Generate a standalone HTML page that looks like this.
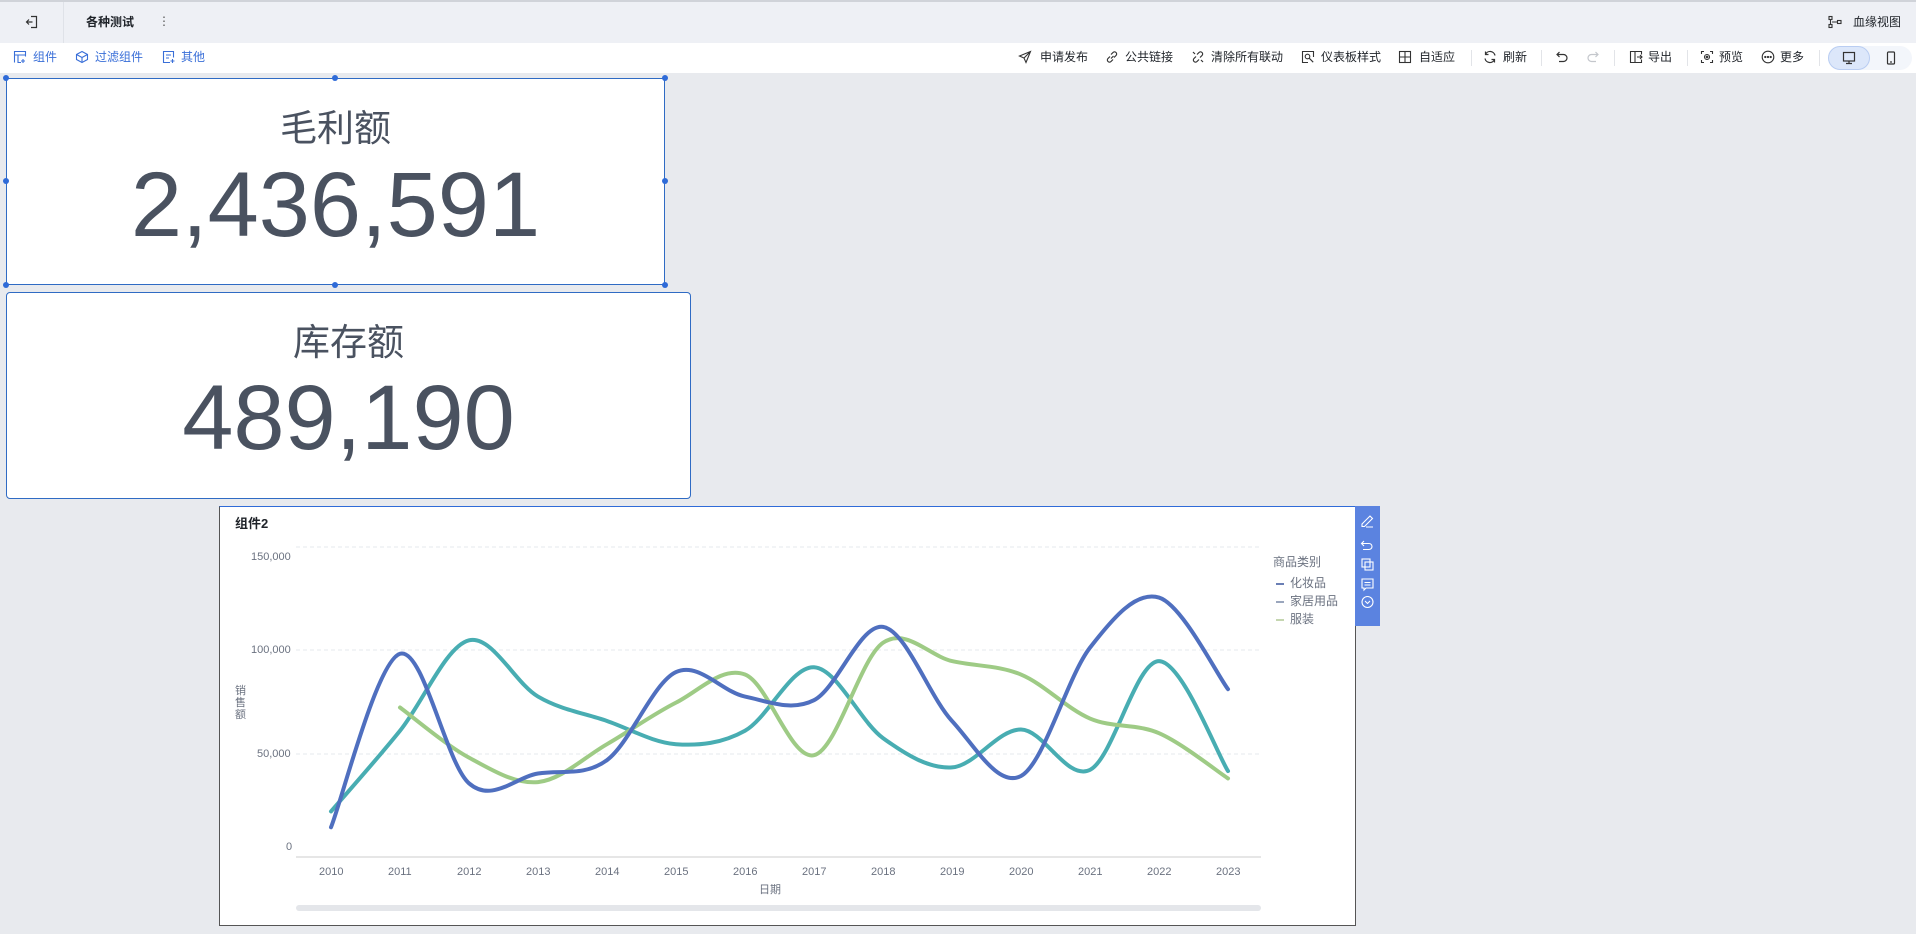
<!DOCTYPE html>
<html><head><meta charset="utf-8">
<style>
*{margin:0;padding:0;box-sizing:border-box}
body{width:1916px;height:934px;overflow:hidden;background:#e8eaee;font-family:"Liberation Sans","Noto Sans CJK SC",sans-serif;color:#1f2329;position:relative}
.abs{position:absolute}
.hdr{left:0;top:0;width:1916px;height:43px;background:#eef0f5;border-top:2px solid #d0d3d9}
.tb{left:0;top:43px;width:1916px;height:30px;background:#fff}
.t{position:absolute;font-size:12px;line-height:14px;white-space:nowrap}
.ic{position:absolute;width:14px;height:14px}
.card{position:absolute;background:#fff;text-align:center;color:#4a5260}
.dot{position:absolute;width:6px;height:6px;border-radius:3px;background:#2f6bd8}
.num{position:absolute;left:0;right:0;font-size:92px;line-height:92px;letter-spacing:0}
.ttl{position:absolute;left:0;right:0;font-size:37px;line-height:40px}
.ax{position:absolute;font-size:11px;color:#6b7280;line-height:12px}
.div{position:absolute;top:50px;width:1px;height:16px;background:#e2e4e8}
</style></head><body>
<div class="abs hdr"></div>
<div class="abs" style="left:63px;top:2px;width:1px;height:41px;background:#dfe2e8"></div>
<svg class="ic" style="left:25px;top:15px" viewBox="0 0 14 14" fill="none" stroke="#333" stroke-width="1.2"><path d="M6 1.5h5.5v11H6M1.5 7h6M4 4.5L1.5 7 4 9.5"/></svg>
<div class="t" style="left:86px;top:15px;font-weight:bold">各种测试</div>
<div class="t" style="left:158px;top:14px;color:#555">⋮</div>
<svg class="ic" style="left:1828px;top:15px" viewBox="0 0 14 14" fill="none" stroke="#333" stroke-width="1.1"><rect x="1" y="1.5" width="3" height="3"/><rect x="1" y="9.5" width="3" height="3"/><rect x="9.5" y="5.5" width="3.5" height="3"/><path d="M2.5 4.5v5M4 7h5.5"/></svg>
<div class="t" style="left:1853px;top:15px">血缘视图</div>

<div class="abs tb"></div>
<svg class="ic" style="left:13px;top:50px" viewBox="0 0 14 14" fill="none" stroke="#3a6fd8" stroke-width="1.1"><path d="M1.5 12.5v-11h11v5M1.5 5h11M5 5v7.5h3M10 9v4M8 11h4"/></svg>
<div class="t" style="left:33px;top:50px;color:#3a6fd8">组件</div>
<svg class="ic" style="left:75px;top:50px" viewBox="0 0 14 14" fill="none" stroke="#3a6fd8" stroke-width="1.1"><path d="M7 1.5l5.5 3v5L7 12.5 1.5 9.5v-5zM1.5 4.5L7 7.5l5.5-3M7 7.5v5"/></svg>
<div class="t" style="left:95px;top:50px;color:#3a6fd8">过滤组件</div>
<svg class="ic" style="left:162px;top:50px" viewBox="0 0 14 14" fill="none" stroke="#3a6fd8" stroke-width="1.1"><path d="M8 12.5H1.5v-11h10v6M4 5h5M4 8h3M10.5 9v4M8.5 11h4"/></svg>
<div class="t" style="left:181px;top:50px;color:#3a6fd8">其他</div>

<svg class="ic" style="left:1018px;top:50px" viewBox="0 0 14 14" fill="none" stroke="#333" stroke-width="1.1"><path d="M12.5 1.5L1.5 6l4.5 2 2 4.5zM6 8l6.5-6.5"/></svg>
<div class="t" style="left:1040px;top:50px">申请发布</div>
<svg class="ic" style="left:1105px;top:50px" viewBox="0 0 14 14" fill="none" stroke="#333" stroke-width="1.2"><path d="M6 8.5l2.5-2.5M5 6.5L3 8.5a2.1 2.1 0 003 3L8 9.5M9 7.5l2-2a2.1 2.1 0 00-3-3L6 4.5"/></svg>
<div class="t" style="left:1125px;top:50px">公共链接</div>
<svg class="ic" style="left:1191px;top:50px" viewBox="0 0 14 14" fill="none" stroke="#333" stroke-width="1.2"><path d="M5 6.5L3 8.5a2.1 2.1 0 003 3L8 9.5M9 7.5l2-2a2.1 2.1 0 00-3-3L6 4.5M2 2l2 2M10 10l2 2"/></svg>
<div class="t" style="left:1211px;top:50px">清除所有联动</div>
<svg class="ic" style="left:1301px;top:50px" viewBox="0 0 14 14" fill="none" stroke="#333" stroke-width="1.1"><path d="M7 12.5H1.5v-11h11V7"/><circle cx="6.5" cy="6.5" r="2.3"/><path d="M8.2 8.2l4 4"/></svg>
<div class="t" style="left:1321px;top:50px">仪表板样式</div>
<svg class="ic" style="left:1398px;top:50px" viewBox="0 0 14 14" fill="none" stroke="#333" stroke-width="1.1"><rect x="1.5" y="1.5" width="11" height="11"/><path d="M1.5 7h11M7 1.5v11"/></svg>
<div class="t" style="left:1419px;top:50px">自适应</div>
<div class="div" style="left:1471px"></div>
<svg class="ic" style="left:1483px;top:50px" viewBox="0 0 14 14" fill="none" stroke="#333" stroke-width="1.2"><path d="M12 5.5A5 5 0 002.5 4.5M2 8.5A5 5 0 0011.5 9.5M2.5 1.5v3h3M11.5 12.5v-3h-3"/></svg>
<div class="t" style="left:1503px;top:50px">刷新</div>
<div class="div" style="left:1541px"></div>
<svg class="ic" style="left:1555px;top:50px" viewBox="0 0 14 14" fill="none" stroke="#333" stroke-width="1.2"><path d="M4.5 2L2 4.5 4.5 7M2 4.5h6.5a3.5 3.5 0 010 7H4"/></svg>
<svg class="ic" style="left:1586px;top:50px" viewBox="0 0 14 14" fill="none" stroke="#c4c7cc" stroke-width="1.2"><path d="M9.5 2L12 4.5 9.5 7M12 4.5H5.5a3.5 3.5 0 000 7H10"/></svg>
<div class="div" style="left:1614px"></div>
<svg class="ic" style="left:1629px;top:50px" viewBox="0 0 14 14" fill="none" stroke="#333" stroke-width="1.1"><path d="M6 1.5H1.5v11H6zM6 1.5h6.5v3M6 12.5h6.5v-3M8 7h5M11 5l2 2-2 2"/></svg>
<div class="t" style="left:1648px;top:50px">导出</div>
<div class="div" style="left:1687px"></div>
<svg class="ic" style="left:1700px;top:50px" viewBox="0 0 14 14" fill="none" stroke="#333" stroke-width="1.1"><path d="M1.5 4V1.5H4M10 1.5h2.5V4M12.5 10v2.5H10M4 12.5H1.5V10"/><circle cx="7" cy="7" r="2.5"/><circle cx="7" cy="7" r=".8"/></svg>
<div class="t" style="left:1719px;top:50px">预览</div>
<svg class="ic" style="left:1761px;top:50px" viewBox="0 0 14 14" fill="none" stroke="#333" stroke-width="1.1"><circle cx="7" cy="7" r="5.8"/><circle cx="4.3" cy="7" r=".6" fill="#333"/><circle cx="7" cy="7" r=".6" fill="#333"/><circle cx="9.7" cy="7" r=".6" fill="#333"/></svg>
<div class="t" style="left:1780px;top:50px">更多</div>
<div class="div" style="left:1819px"></div>
<div class="abs" style="left:1828px;top:46px;width:84px;height:24px;border-radius:12px;background:#f3f6fb"></div>
<div class="abs" style="left:1828px;top:46px;width:42px;height:24px;border-radius:12px;background:#dce7fa;border:1px solid #b9cdf2"></div>
<svg class="ic" style="left:1842px;top:51px" viewBox="0 0 14 14" fill="none" stroke="#333" stroke-width="1.2"><rect x="1.5" y="1.5" width="11" height="8.5"/><path d="M7 10v2.5M4 12.5h6"/></svg>
<svg class="ic" style="left:1884px;top:51px" viewBox="0 0 14 14" fill="none" stroke="#333" stroke-width="1.2"><rect x="3.5" y="1" width="7" height="12" rx="1"/><path d="M6 11h2"/></svg>

<!-- card 1 -->
<div class="card" style="left:6px;top:78px;width:659px;height:207px;border:1.5px solid #2f6bc4">
<div class="ttl" style="top:30px">毛利额</div>
<div class="num" style="top:80px">2,436,591</div>
</div>
<div class="dot" style="left:3px;top:75px"></div><div class="dot" style="left:332px;top:75px"></div><div class="dot" style="left:662px;top:75px"></div>
<div class="dot" style="left:3px;top:178px"></div><div class="dot" style="left:662px;top:178px"></div>
<div class="dot" style="left:3px;top:282px"></div><div class="dot" style="left:332px;top:282px"></div><div class="dot" style="left:662px;top:282px"></div>
<!-- card 2 -->
<div class="card" style="left:6px;top:292px;width:685px;height:207px;border:1.5px solid #2f6bc4;border-radius:4px">
<div class="ttl" style="top:30px">库存额</div>
<div class="num" style="top:79px">489,190</div>
</div>

<!-- chart -->
<div class="abs" style="left:219px;top:506px;width:1137px;height:420px;background:#fff;border:1px solid #555;border-top:1.5px solid #2f6bd8"></div>
<div class="t" style="left:235px;top:517px;font-size:13px;font-weight:bold">组件2</div>
<div class="ax" style="left:251px;top:551px">150,000</div>
<div class="ax" style="left:251px;top:644px">100,000</div>
<div class="ax" style="left:257px;top:748px">50,000</div>
<div class="ax" style="left:286px;top:841px">0</div>
<div class="ax" style="left:235px;top:685px;width:12px;line-height:12px;font-size:11px">销售额</div>
<div class="ax" style="left:759px;top:884px">日期</div>
<div class="abs" style="left:296px;top:905px;width:965px;height:6px;border-radius:3px;background:#e4e6ea"></div>
<div class="ax" style="left:1273px;top:556px;font-size:12px">商品类别</div>
<div class="ax" style="left:1290px;top:577px;font-size:12px">化妆品</div>
<div class="ax" style="left:1290px;top:595px;font-size:12px">家居用品</div>
<div class="ax" style="left:1290px;top:613px;font-size:12px">服装</div>
<div class="abs" style="left:1276px;top:583px;width:8px;height:2px;background:#6a7fb5"></div>
<div class="abs" style="left:1276px;top:601px;width:8px;height:2px;background:#9aa6bd"></div>
<div class="abs" style="left:1276px;top:619px;width:8px;height:2px;background:#c5d6b0"></div>
<div id="xl"></div>
<div class="abs" style="left:1355px;top:506px;width:25px;height:120px;background:#5b83e0"></div>
<svg class="abs" style="left:1355px;top:506px" width="25" height="120" viewBox="0 0 25 120" fill="none" stroke="#fff" stroke-width="1.1">
<path d="M7 18l8-8 2.5 2.5-8 8H7zM11 21h7"/>
<path d="M9 35l-2.5 2.5L9 40M6.5 37.5H14a3 3 0 010 6H8"/>
<rect x="7" y="53" width="8" height="8"/><rect x="10" y="56" width="8" height="8"/>
<path d="M7 73h11v9h-7l-2 2v-2H7zM9.5 76.5h6M9.5 79h6"/>
<circle cx="12.5" cy="96" r="5.5"/><path d="M10 95l2.5 2.5L15 95"/>
</svg>
<svg id="ch" class="abs" style="left:0;top:0" width="1916" height="934">
<g stroke="#e6e8ec" stroke-dasharray="4 3"><line x1="296" y1="547" x2="1261" y2="547"/><line x1="296" y1="650" x2="1261" y2="650"/><line x1="296" y1="754" x2="1261" y2="754"/></g>
<line x1="296" y1="857" x2="1261" y2="857" stroke="#ccc"/>
</svg>
<script>
var xs=[],lab="";for(var i=0;i<14;i++){var x=331+i*69;xs.push(x);lab+='<div class="ax" style="left:'+(x-12)+'px;top:866px">'+(2010+i)+'</div>';}
document.getElementById('xl').innerHTML=lab;
var s=1.222;
function path(ys,start){var p=[];for(var i=0;i<ys.length;i++)p.push([xs[i+start],ys[i]*s]);
var d="M"+p[0][0]+","+p[0][1];for(var i=0;i<p.length-1;i++){var a=p[i-1]||p[i],b=p[i],c=p[i+1],e=p[i+2]||c;
d+=" C"+(b[0]+(c[0]-a[0])/6)+","+(b[1]+(c[1]-a[1])/6)+" "+(c[0]-(e[0]-b[0])/6)+","+(c[1]-(e[1]-b[1])/6)+" "+c[0]+","+c[1];}return d;}
var L=[["#48ADB2",[664,598,524,570,590,609,598,546,604,628,597,630,541,631],0],
["#9ECB85",[579,620,640,609,575,552,618,526,541,552,588,600,637],1],
["#4F6FBF",[677,535,641,633,622,550,570,573,513,590,635,530,489,564],0]];
var h="";L.forEach(function(l){h+='<path d="'+path(l[1],l[2])+'" fill="none" stroke="'+l[0]+'" stroke-width="4" stroke-linecap="round"/>';});
document.getElementById('ch').insertAdjacentHTML('beforeend',h);
</script>
</body></html>
